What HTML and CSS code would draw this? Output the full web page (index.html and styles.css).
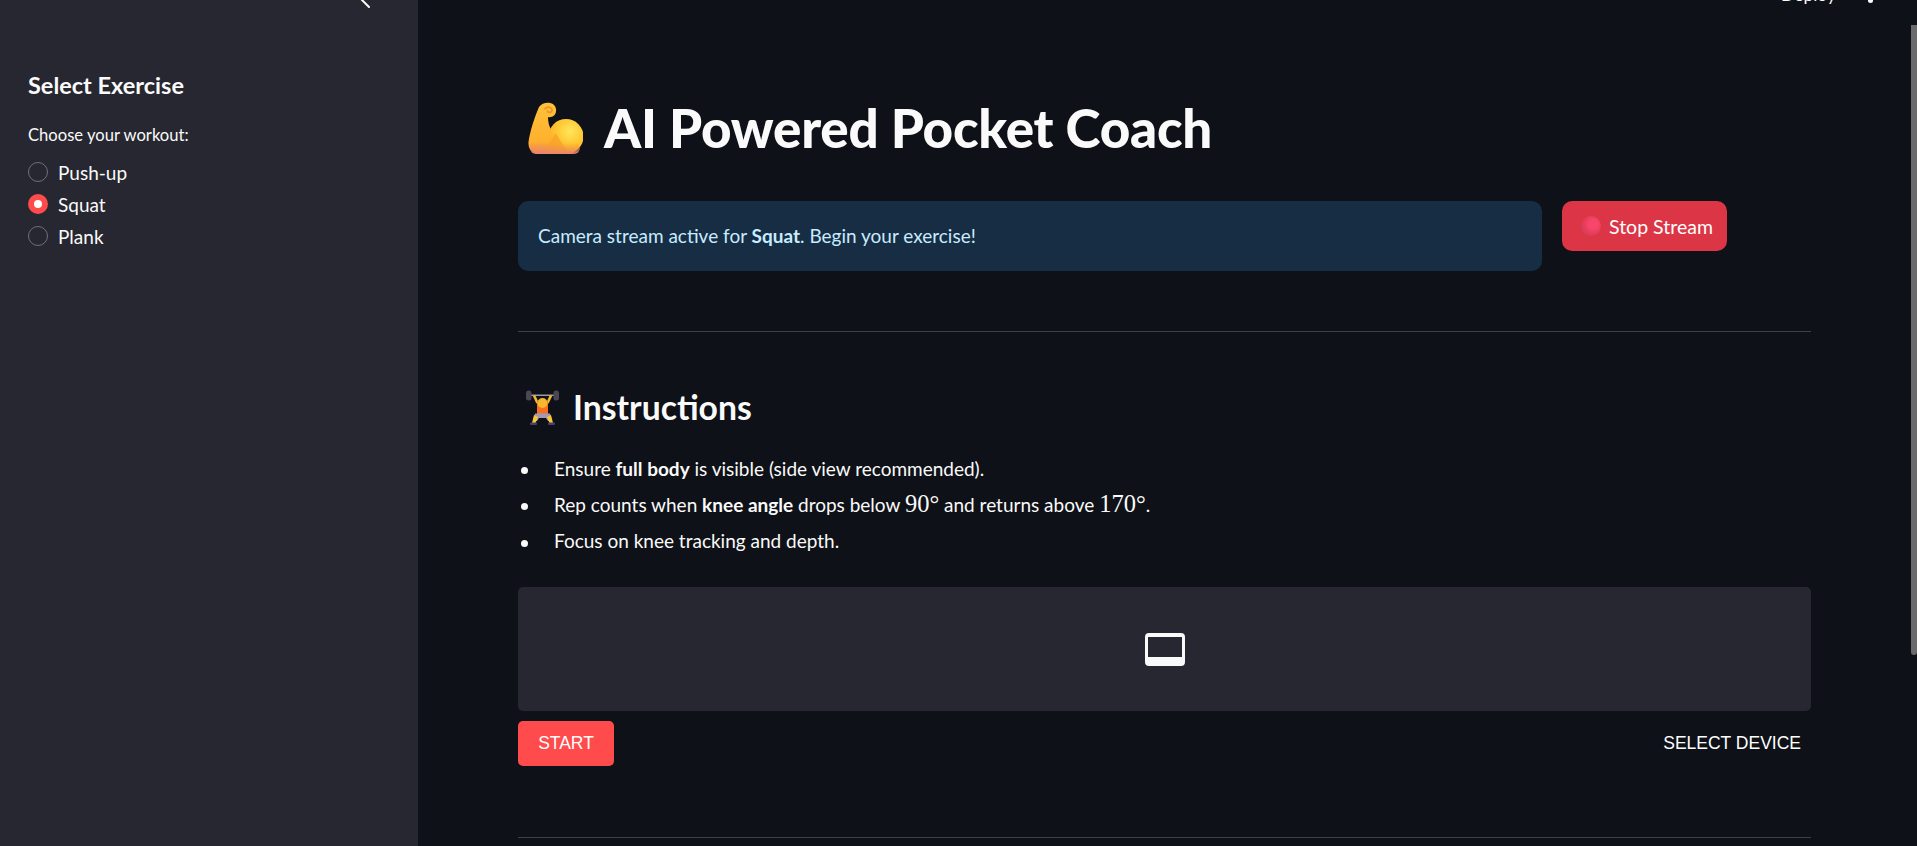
FILE: index.html
```html
<!DOCTYPE html>
<html lang="en">
<head>
<meta charset="utf-8">
<title>AI Powered Pocket Coach</title>
<link rel="stylesheet" href="styles.css">
</head>
<body>
<div class="app">
  <aside class="sidebar">
    <div class="side-top">
      <svg class="chevron" width="12" height="8" viewBox="0 0 12 8"><path d="M1 -1 L9 7" fill="none" stroke="#fafafa" stroke-width="2" stroke-linecap="round"/></svg>
    </div>
    <h3 class="side-title">Select Exercise</h3>
    <p class="side-label">Choose your workout:</p>
    <div class="radio-group">
      <div class="radio"><span class="dot"></span><span>Push-up</span></div>
      <div class="radio"><span class="dot on"></span><span>Squat</span></div>
      <div class="radio"><span class="dot"></span><span>Plank</span></div>
    </div>
  </aside>
  <main class="main">
    <div class="thumb"></div>
    <div class="topbar">
      <span class="deploy">Deploy</span>
      <span class="kebab"></span>
    </div>
    <div class="title-row">
      <svg class="muscle" width="55" height="52" viewBox="0 0 55 52">
        <defs>
          <linearGradient id="armg" x1="0" y1="0" x2="0" y2="1">
            <stop offset="0" stop-color="#ffc23a"/>
            <stop offset="0.75" stop-color="#ffb02e"/>
            <stop offset="1" stop-color="#ee8a68"/>
          </linearGradient>
          <radialGradient id="bic" cx="0.62" cy="0.35" r="0.7">
            <stop offset="0" stop-color="#ffe65c"/>
            <stop offset="0.6" stop-color="#ffc430"/>
            <stop offset="1" stop-color="#fca92c"/>
          </radialGradient>
          <linearGradient id="low" x1="0" y1="0" x2="0" y2="1">
            <stop offset="0" stop-color="#f59a2c" stop-opacity="0"/>
            <stop offset="1" stop-color="#ea8272"/>
          </linearGradient>
        </defs>
        <path d="M11 5 C15 -1 27 -1 28 7 C29 13 24 16 20 15 C20 20 21 25 24 29 L42 52 L12 52 C4 52 0 47 0.5 40 C2 29 7 14 11 5Z" fill="url(#armg)"/>
        <circle cx="38" cy="34.500" r="17.500" fill="url(#bic)"/>
        <path d="M15 52 L27.500 31 L41 52Z" fill="#f9a22b" opacity="0.8"/>
        <rect x="2" y="40" width="50" height="12" rx="6" fill="url(#low)"/>
        <path d="M17 7 C19 4 24 5 24 8 C24 11 20 11 19.500 9" fill="none" stroke="#e9952a" stroke-width="1.600" stroke-linecap="round"/>
      </svg>
      <h1 class="title">AI Powered Pocket Coach</h1>
    </div>
    <div class="alert-row">
      <div class="alert">Camera stream active for <strong>Squat</strong>. Begin your exercise!</div>
      <button class="stop" type="button">
        <span class="ball"></span>
        <span>Stop Stream</span>
      </button>
    </div>
    <hr class="rule rule-first">
    <div class="section-row">
      <svg class="lifter" width="35" height="35" viewBox="0 0 35 35">
        <rect x="1" y="4.500" width="33" height="1.500" fill="#9b9aa3"/>
        <rect x="1" y="0.500" width="5.500" height="10" rx="2.500" fill="#4a4655"/>
        <rect x="28.500" y="0.500" width="5.500" height="10" rx="2.500" fill="#4a4655"/>
        <path d="M9 5.500 L12.500 13" stroke="#f5b82e" stroke-width="2.600" fill="none"/>
        <path d="M26 5.500 L22.500 13" stroke="#f5b82e" stroke-width="2.600" fill="none"/>
        <rect x="12" y="11" width="11" height="13" fill="#f7701e"/>
        <circle cx="17.500" cy="13" r="5" fill="#f5b82e"/>
        <path d="M10 23.500 H25 L27 31 H23 L21 28 H14 L12 31 H8Z" fill="#a49ab8"/>
        <path d="M9 25 L7 33 H10.500 L13 27Z" fill="#f7c92e"/>
        <path d="M26 25 L28 33 H24.500 L22 27Z" fill="#f7c92e"/>
        <rect x="5" y="32.500" width="7" height="2.500" rx="1" fill="#4f3a78"/>
        <rect x="23" y="32.500" width="7" height="2.500" rx="1" fill="#4f3a78"/>
      </svg>
      <h2 class="section-title">Instructions</h2>
    </div>
    <ul class="steps">
      <li>Ensure <strong>full body</strong> is visible (side view recommended).</li>
      <li>Rep counts when <strong>knee angle</strong> drops below <span class="math">90°</span> and returns above <span class="math">170°</span>.</li>
      <li>Focus on knee tracking and depth.</li>
    </ul>
    <div class="video">
      <svg width="40" height="33" viewBox="0 0 40 33"><path fill="#fafafa" fill-rule="evenodd" d="M4 0H36A4 4 0 0 1 40 4V29A4 4 0 0 1 36 33H4A4 4 0 0 1 0 29V4A4 4 0 0 1 4 0ZM3 4V24H37V4Z"/></svg>
    </div>
    <div class="device-row">
      <button class="start" type="button">START</button>
      <button class="select" type="button">SELECT DEVICE</button>
    </div>
    <hr class="rule rule-last">
  </main>
</div>
</body>
</html>
```
FILE: styles.css
```css
* { box-sizing: border-box; }
html, body { margin: 0; height: 100%; overflow: hidden; background: #0e1117; }
body { font-family: Lato, "Liberation Sans", sans-serif; color: #fafafa; font-size: 19px; }
.app { display: flex; height: 846px; }
.sidebar { width: 418px; flex: none; background: #262730; padding: 0 28px; }
.side-top { height: 8px; overflow: hidden; display: flex; justify-content: flex-end; margin-right: -9px; padding-right: 27px; }
.side-title { margin: 61px 0 0; font-size: 23.500px; line-height: 32px; font-weight: 700; }
.side-label { margin: 22px 0 0; font-size: 16.600px; line-height: 24px; }
.radio-group { margin-top: 10px; display: flex; flex-direction: column; gap: 2px; }
.radio { display: flex; align-items: center; gap: 10px; height: 30px; }
.dot { width: 20px; height: 20px; border-radius: 50%; border: 1px solid #6f7077; background: #262730; }
.dot.on { border: 6px solid #ff4b4b; background: #fff; }
.main { position: relative; flex: 1; padding: 0 106px 0 100px; min-width: 0; }
.thumb { position: absolute; right: 0; top: 25px; width: 6px; height: 630px; background: #6b6b6e; border-radius: 0 0 3px 3px; }
.topbar { height: 5px; overflow: hidden; display: flex; justify-content: flex-end; align-items: flex-end; gap: 32px; margin-right: -62px; }
.deploy { font-size: 17.500px; line-height: 24px; margin-bottom: -2px; }
.kebab { width: 5px; height: 5px; border-radius: 50%; background: #fafafa; margin-bottom: 2px; }
.title-row { margin-top: 91px; height: 64px; display: flex; align-items: center; }
.muscle { flex: none; margin-left: 10px; }
.title { margin: 0 0 0 21px; font-size: 53px; line-height: 64px; font-weight: 900; white-space: nowrap; letter-spacing: -0.250px; }
.alert-row { margin-top: 41px; display: flex; gap: 20px; align-items: flex-start; }
.alert { width: 1024px; height: 70px; border-radius: 10px; background: #172d43; color: #c7ebff; padding: 0 20px; line-height: 70px; }
.stop { width: 165px; height: 50px; border: 0; border-radius: 10px; background: #dc3545; color: #fff; font: inherit; font-size: 19.500px; display: flex; align-items: center; gap: 8px; padding: 0 0 0 19px; }
.ball { width: 20px; height: 20px; border-radius: 50%; background: radial-gradient(circle at 62% 42%, #f8466a 0 25%, #e23c58 60%, #b04a60 100%); }
.rule { border: 0; height: 1px; background: #3c3f45; margin: 0; }
.rule-first { margin-top: 60px; }
.section-row { margin-top: 53px; height: 44px; display: flex; align-items: center; }
.lifter { flex: none; margin-left: 7px; }
.section-title { margin: 0 0 0 13px; font-size: 33.700px; line-height: 44px; font-weight: 700; }
.steps { margin: 21.500px 0 0; padding: 0; list-style: none; }
.steps li { height: 36.200px; line-height: 36px; }
.steps li::before { content: ""; display: inline-block; width: 7px; height: 7px; border-radius: 50%; background: #fafafa; margin: 0 26px 0 3px; vertical-align: middle; }
.math { font-family: "Liberation Serif", serif; font-size: 24.500px; line-height: 1; }
.video { margin-top: 28.400px; height: 124px; background: #262730; border-radius: 5px; display: flex; align-items: center; justify-content: center; }
.device-row { margin-top: 10px; height: 45px; display: flex; justify-content: space-between; align-items: center; }
.start, .select { font-family: "Liberation Sans", sans-serif; font-size: 17.500px; color: #fff; border: 0; border-radius: 5px; height: 45px; }
.start { width: 96px; background: #ff4b4b; padding: 0; }
.select { background: none; padding: 0 10px; }
.rule-last { margin-top: 71px; }
```
